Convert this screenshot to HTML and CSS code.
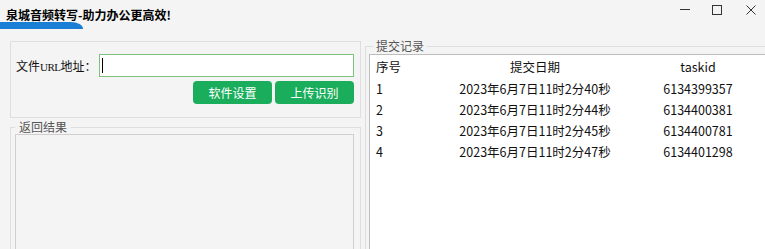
FILE: index.html
```html
<!DOCTYPE html>
<html lang="zh-CN">
<head>
  <meta charset="UTF-8">
  <title>泉城音频转写</title>
  <link rel="stylesheet" href="styles.css">
</head>
<body>
  <div class="window">
    <div class="titlebar">
      <div class="title-wrap">
        <div class="title">泉城音频转写-助力办公更高效!</div>
        <div class="accent"></div>
      </div>
      <div class="controls">
        <svg width="12" height="12" viewBox="0 0 12 12"><line x1="1" y1="5.5" x2="11" y2="5.5" stroke="#333" stroke-width="1"/></svg>
        <svg width="12" height="12" viewBox="0 0 12 12"><rect x="1.5" y="1.5" width="9" height="9" fill="none" stroke="#333" stroke-width="1"/></svg>
        <svg width="12" height="12" viewBox="0 0 12 12"><path d="M1.5 1.5 L10.5 10.5 M10.5 1.5 L1.5 10.5" stroke="#333" stroke-width="1"/></svg>
      </div>
    </div>

    <div class="main">
      <div class="left">
        <div class="group url-group">
          <div class="url-row">
            <label class="url-label" for="url">文件<span class="serif">URL</span>地址：</label>
            <div class="url-input" id="url"><span class="caret"></span></div>
          </div>
          <div class="buttons">
            <button type="button" class="btn">软件设置</button>
            <button type="button" class="btn">上传识别</button>
          </div>
        </div>

        <fieldset class="result-group">
          <legend>返回结果</legend>
          <div class="result-box"></div>
        </fieldset>
      </div>

      <fieldset class="records">
        <legend>提交记录</legend>
        <div class="listview">
          <table>
            <tr>
              <th class="col-no">序号</th>
              <th class="col-date">提交日期</th>
              <th class="col-id">taskid</th>
            </tr>
            <tr>
              <td class="col-no">1</td>
              <td class="col-date">2023年6月7日11时2分40秒</td>
              <td class="col-id">6134399357</td>
            </tr>
            <tr>
              <td class="col-no">2</td>
              <td class="col-date">2023年6月7日11时2分44秒</td>
              <td class="col-id">6134400381</td>
            </tr>
            <tr>
              <td class="col-no">3</td>
              <td class="col-date">2023年6月7日11时2分45秒</td>
              <td class="col-id">6134400781</td>
            </tr>
            <tr>
              <td class="col-no">4</td>
              <td class="col-date">2023年6月7日11时2分47秒</td>
              <td class="col-id">6134401298</td>
            </tr>
          </table>
        </div>
      </fieldset>
    </div>
  </div>
</body>
</html>
```

FILE: styles.css
```css
* {
  padding: 0;
  margin: 0;
  box-sizing: border-box;
}

body {
  font-family: "Noto Sans CJK SC", "Noto Sans", sans-serif;
  font-size: 12px;
  color: #1a1a1a;
  background-color: #f4f4f4;
}

.window {
  width: 765px;
  height: 249px;
  overflow: hidden;
  background-color: #f4f4f4;
}

/* title bar */
.titlebar {
  height: 39px;
  display: flex;
  justify-content: space-between;
  align-items: flex-start;
}

.title {
  margin-top: 8px;
  padding-left: 6px;
  height: 14px;
  line-height: 14px;
  font-size: 12px;
  font-weight: bold;
  color: #000;
  white-space: nowrap;
}

.accent {
  width: 83px;
  height: 7px;
  background-color: #1a7fd4;
  border-top-right-radius: 12px 7px;
}

.controls {
  display: flex;
  gap: 22px;
  margin-top: 4px;
  margin-right: 8px;
}

.controls svg {
  display: block;
}

.controls svg:first-child {
  margin-right: -2px;
}

.main {
  display: flex;
  gap: 4px;
  padding-left: 10px;
}

.left {
  width: 351px;
}

/* url group */
.url-group {
  margin-top: 2px;
  border: 1px solid #dedede;
  padding: 12px 6px 13px 5px;
}

.url-row {
  display: flex;
  align-items: center;
}

.url-label {
  width: 83px;
  font-size: 12px;
  color: #111;
  white-space: nowrap;
}

.serif {
  font-family: "Liberation Serif", serif;
  font-size: 11px;
  letter-spacing: -0.5px;
}

.url-input {
  width: 255px;
  height: 23px;
  background-color: #fff;
  border: 1px solid #7cc27c;
  display: flex;
  align-items: center;
  padding-left: 2px;
}

.caret {
  width: 1px;
  height: 15px;
  background-color: #000;
}

.buttons {
  display: flex;
  justify-content: flex-end;
  gap: 3px;
  margin-top: 4px;
}

.btn {
  width: 79px;
  height: 23px;
  border: none;
  border-radius: 4px;
  background-color: #19ad5c;
  color: #fff;
  font-family: "Noto Sans CJK SC", sans-serif;
  font-size: 12px;
  cursor: pointer;
}

/* result group */
.result-group {
  margin-top: 2px;
  border: 1px solid #dedede;
  padding: 0 6px 0 4px;
  height: 140px;
}

.result-group legend,
.records legend {
  font-size: 12px;
  line-height: 14px;
  color: #555;
  padding: 0 4px;
}

.result-box {
  height: 130px;
  border: 1px solid #cfcfcf;
  background-color: #f4f4f4;
}

/* records group */
.records {
  width: 398px;
  height: 230px;
  border: 1px solid #dedede;
  padding: 0 2px 0 3px;
}

.records legend {
  margin-left: 4px;
  padding: 0 3px;
}

.listview {
  margin-top: 1px;
  height: 200px;
  background-color: #fff;
  border: 1px solid #bdbdbd;
  overflow: hidden;
}

.listview table {
  width: 396px;
  border-collapse: collapse;
  font-size: 12.5px;
  color: #111;
}

.listview th {
  font-weight: normal;
  height: 23px;
}

.listview td {
  height: 21px;
}

.col-no {
  width: 70px;
  text-align: left;
  padding-left: 6px;
}

.col-date {
  width: 190px;
  text-align: center;
}

.col-id {
  width: 136px;
  text-align: center;
}
```
